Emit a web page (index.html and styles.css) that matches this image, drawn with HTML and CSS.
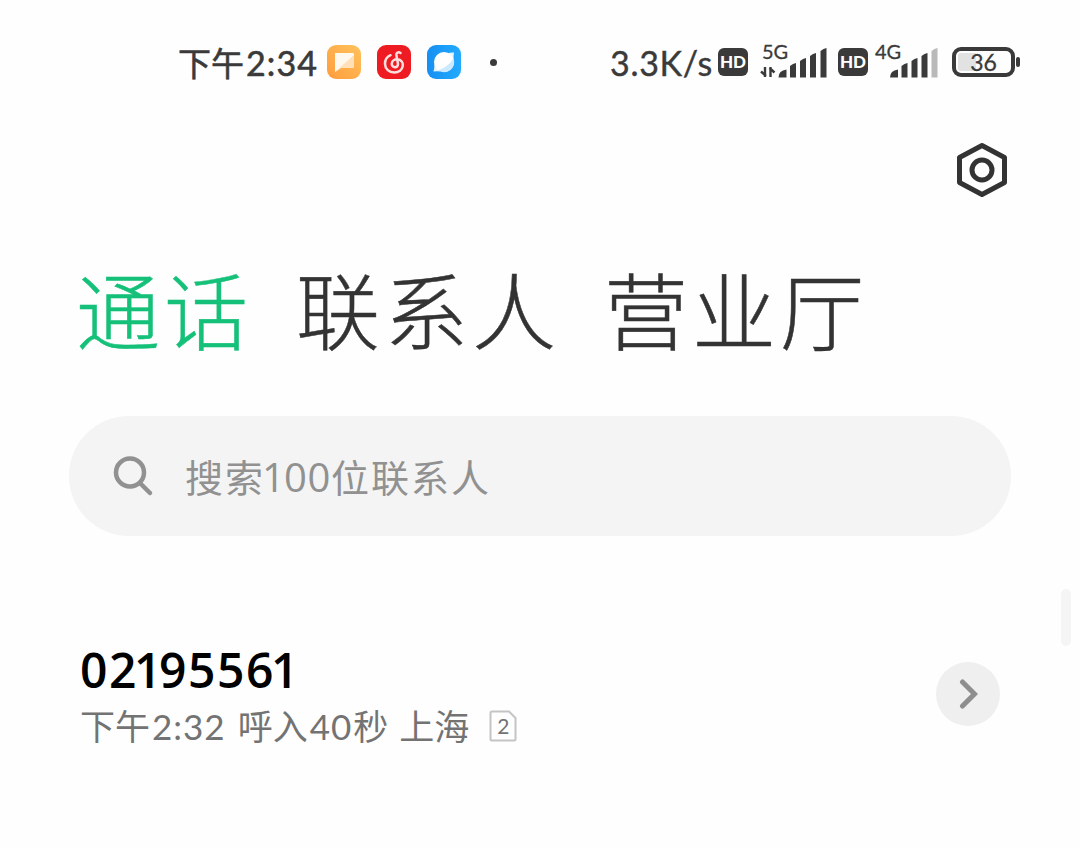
FILE: index.html
```
<!DOCTYPE html>
<html lang="zh-CN">
<head>
    <meta charset="UTF-8">
    <meta name="viewport" content="width=device-width, initial-scale=1.0">
    <title>通话</title>
    <link rel="stylesheet" href="styles.css">
</head>
<body>
    <div class="phone">
        <!-- Status bar -->
        <div class="status-bar">
            <div class="status-left">
                <span class="clock">下午<span class="time">2:34</span></span>
                <div class="app-icons">
                    <svg width="34" height="34" viewBox="0 0 34 34">
                        <defs><linearGradient id="orange" x1="0" y1="1" x2="1" y2="0"><stop offset="0" stop-color="#ff9c3d"/><stop offset="1" stop-color="#ffc35c"/></linearGradient></defs>
                        <rect width="34" height="34" rx="9" fill="url(#orange)"/>
                        <path d="M8 8h18q1 0 1 1v13q0 1-1 1H14l-6 4z" fill="#fff8ef"/>
                        <path d="M27 10v12q0 1-1 1H14l-6 4z" fill="#ffe0b8"/>
                    </svg>
                    <svg width="34" height="34" viewBox="0 0 34 34">
                        <rect width="34" height="34" rx="9" fill="#ee1c22"/>
                        <path d="M23.500 8c-2-1.500-4.600-.2-4.100 2.200l1.500 8c.5 2.500-1 4-2.900 4-2.200 0-3.400-1.700-3.200-3.800.3-2.900 3.100-4.300 5.500-4.100 4 .3 6 3.300 5.500 6.500-.6 4.300-4.200 6.700-8.400 6.700-5.300 0-9.300-3.600-9.400-8.600-.1-4.100 2.300-7.200 5.500-8.700" fill="none" stroke="#ffdede" stroke-width="2.500" stroke-linecap="round"/>
                    </svg>
                    <svg width="34" height="34" viewBox="0 0 34 34">
                        <defs><linearGradient id="blue" x1="0" y1="0" x2="1" y2="0"><stop offset="0" stop-color="#168ff2"/><stop offset="1" stop-color="#22abff"/></linearGradient></defs>
                        <rect width="34" height="34" rx="9" fill="url(#blue)"/>
                        <path d="M20 8.500q4-1.500 7-1-.5 3-.5 7zM7.500 19q0 4-1 7.500 4-.5 7 0z" fill="#e6f4ff"/>
                        <circle cx="17" cy="17" r="10" fill="#fff"/>
                        <path d="M26.500 13.500A10 10 0 0 1 11 25q9-2 15.500-11.500z" fill="#cce9ff"/>
                    </svg>
                </div>
                <span class="more-dot"></span>
            </div>
            <div class="status-right">
                <span class="speed">3.3K/s</span>
                <span class="hd">HD</span>
                <div class="signal signal-5g">
                    <span class="network">5G</span>
                    <svg width="68" height="32" viewBox="0 0 68 32">
                        <path d="M5 21v10M6 30L1 25.500M10.500 31V21M9.500 22l5 4.500" fill="none" stroke="#3a3a3a" stroke-width="2.400"/>
                        <path d="M18.500 31.500q0-7 8-8v8z" fill="#3a3a3a"/>
                        <path d="M30 31.500V20q3-2.500 6-3v14.500zM40 31.500V15q3-2.500 6-3v19.500zM50 31.500V10q3-2.500 6-3v24.500zM60.500 31.500V5q3-2.500 6-3v29.500z" fill="#3a3a3a"/>
                    </svg>
                </div>
                <span class="hd">HD</span>
                <div class="signal signal-4g">
                    <span class="network">4G</span>
                    <svg width="64" height="32" viewBox="0 0 64 32">
                        <path d="M15 31.500q0-7 8-8v8z" fill="#3a3a3a"/>
                        <path d="M26.500 31.500V20q3-2.500 6-3v14.500zM36.500 31.500V15q3-2.500 6-3v19.500zM46.500 31.500V10q3-2.500 6-3v24.500z" fill="#3a3a3a"/>
                        <path d="M56.500 31.500V5q3-2.500 6-3v29.500z" fill="#b9b9b9"/>
                    </svg>
                </div>
                <div class="battery"><span class="battery-level">36</span></div>
                <span class="battery-tip"></span>
            </div>
        </div>

        <!-- Settings -->
        <div class="toolbar">
            <svg width="54" height="56" viewBox="0 0 54 56" fill="none" stroke="#333" stroke-width="5" stroke-linejoin="round">
                <path d="M27 3.500L49.500 15.500v25L27 52.500 4.500 40.500v-25z"/>
                <circle cx="27" cy="28" r="10"/>
            </svg>
        </div>

        <!-- Tabs -->
        <div class="tabs">
            <span class="tab active">通话</span>
            <span class="tab">联系人</span>
            <span class="tab">营业厅</span>
        </div>

        <!-- Search -->
        <div class="search-box">
            <svg width="42" height="42" viewBox="0 0 42 42" fill="none" stroke="#919191" stroke-width="4.500" stroke-linecap="round">
                <circle cx="18" cy="17.500" r="14"/>
                <path d="M28.500 28.500L38 38"/>
            </svg>
            <span class="search-text">搜<span class="tight">索</span><span class="count"><span class="tight">1</span>00</span>位联系人</span>
        </div>

        <!-- Call log -->
        <div class="call-row">
            <div class="call-info">
                <div class="call-number">0<span class="tight">21</span>955<span class="tight">61</span></div>
                <div class="call-detail">
                    <span>下午<span class="digits">2:32</span></span>
                    <span>呼入<span class="digits">40</span>秒</span>
                    <span>上海</span>
                    <span class="sim">
                        <svg width="28" height="32" viewBox="0 0 28 32"><path d="M3 1.500h17l6.500 6.500v21q0 1.500-1.500 1.500H3q-1.500 0-1.500-1.500V3q0-1.500 1.500-1.500z" fill="none" stroke="#c4c4c4" stroke-width="2"/></svg>
                        <span class="sim-number">2</span>
                    </span>
                </div>
            </div>
            <div class="call-arrow">
                <svg width="20" height="32" viewBox="0 0 20 32"><path d="M4.500 4L16.500 16 4.500 28" fill="none" stroke="#8e8e8e" stroke-width="5" stroke-linecap="round"/></svg>
            </div>
        </div>
        <div class="scroll-thumb"></div>
    </div>
</body>
</html>
```
FILE: styles.css
```
body {
    margin: 0;
    background-color: #fefefe;
    color: #333;
    font-family: Lato, "Noto Sans CJK SC", sans-serif;
}
.phone {
    position: relative;
    width: 1080px;
    height: 848px;
    overflow: hidden;
}
svg {
    display: block;
    flex-shrink: 0;
}
.status-bar {
    display: flex;
    justify-content: space-between;
    height: 124px;
    padding: 0 60px 0 178px;
    white-space: nowrap;
    color: #3a3a3a;
}
.status-left, .status-right {
    display: flex;
    align-items: center;
}
.clock {
    width: 149px;
    height: 44px;
    font-size: 33px;
    line-height: 45px;
    -webkit-text-stroke: 0.6px #3a3a3a;
}
.time {
    margin-left: 2px;
    font-size: 34px;
    letter-spacing: 1.1px;
}
.app-icons {
    display: flex;
    gap: 16px;
}
.more-dot {
    width: 7px;
    height: 7px;
    margin-left: 29px;
    border-radius: 50%;
    background-color: #3a3a3a;
}
.speed {
    width: 108px;
    font-size: 34px;
    letter-spacing: 0.7px;
    -webkit-text-stroke: 0.4px #3a3a3a;
}
.hd {
    width: 30px;
    height: 28px;
    border-radius: 6px;
    background-color: #3a3a3a;
    color: #fff;
    font-size: 17px;
    font-weight: 900;
    line-height: 28px;
    text-align: center;
}
.signal {
    position: relative;
}
.signal-5g {
    margin: 0 10px 0 12px;
}
.signal-4g {
    margin: 0 13px 0 7px;
}
.network {
    position: absolute;
    top: -7px;
    left: 2px;
    font-size: 20px;
    line-height: 24px;
    -webkit-text-stroke: 0.3px #3a3a3a;
}
.signal-4g .network {
    left: 0;
}
.battery {
    box-sizing: border-box;
    width: 63px;
    height: 30px;
    padding: 2px;
    border: 4px solid #3a3a3a;
    border-radius: 9px;
}
.battery-level {
    display: block;
    height: 18px;
    border-radius: 3px;
    background: linear-gradient(to right, #e2e2e2 36%, transparent 36%);
    font-size: 23px;
    line-height: 19px;
    text-align: center;
    -webkit-text-stroke: 0.3px #3a3a3a;
}
.battery-tip {
    width: 4px;
    height: 10px;
    margin-left: 1px;
    border-radius: 2px;
    background-color: #3a3a3a;
}
.toolbar {
    display: flex;
    justify-content: flex-end;
    height: 122px;
    padding: 18px 71px 0 0;
    box-sizing: border-box;
}
.tabs {
    display: flex;
    gap: 44px;
    height: 170px;
    padding-left: 76px;
    box-sizing: border-box;
    font-size: 84px;
    font-weight: 300;
    line-height: 123px;
    letter-spacing: 4px;
    white-space: nowrap;
}
.tab {
    font-family: "Noto Sans CJK SC", sans-serif;
    -webkit-text-stroke: 0.5px #333;
}
.tab.active {
    color: #15c079;
    -webkit-text-stroke-color: #15c079;
}
.search-box {
    display: flex;
    align-items: center;
    width: 942px;
    height: 120px;
    margin-left: 69px;
    padding-left: 43px;
    box-sizing: border-box;
    border-radius: 60px;
    background-color: #f4f4f4;
    color: #919191;
}
.search-text {
    height: 60px;
    margin-left: 31px;
    font-size: 38px;
    line-height: 61px;
    letter-spacing: 2px;
    white-space: nowrap;
}
.search-text .tight {
    letter-spacing: -1px;
}
.count {
    font-family: "Open Sans", sans-serif;
    font-size: 40px;
    letter-spacing: 0.7px;
}
.call-row {
    display: flex;
    justify-content: space-between;
    margin-top: 104px;
    padding: 0 80px 0 80px;
}
.call-number {
    height: 62px;
    color: #000;
    font-family: "Open Sans", sans-serif;
    font-size: 48px;
    font-weight: 600;
    line-height: 59px;
    letter-spacing: 1.5px;
}
.call-number .tight {
    letter-spacing: -2.4px;
}
.call-detail {
    display: flex;
    align-items: center;
    gap: 11px;
    height: 48px;
    color: #737373;
    font-size: 35px;
    line-height: 46px;
    white-space: nowrap;
}
.digits {
    margin: 0 1px 0 2px;
    letter-spacing: 1px;
}
.sim {
    position: relative;
    margin-left: 9px;
}
.sim-number {
    position: absolute;
    top: 0;
    left: 0;
    width: 28px;
    font-size: 21px;
    line-height: 32px;
    text-align: center;
}
.call-arrow {
    display: flex;
    align-items: center;
    justify-content: center;
    width: 64px;
    height: 64px;
    margin-top: 22px;
    border-radius: 50%;
    background-color: #efefef;
}
.scroll-thumb {
    position: absolute;
    top: 589px;
    right: 9px;
    width: 10px;
    height: 57px;
    border-radius: 5px;
    background-color: #f5f5f5;
}
```
